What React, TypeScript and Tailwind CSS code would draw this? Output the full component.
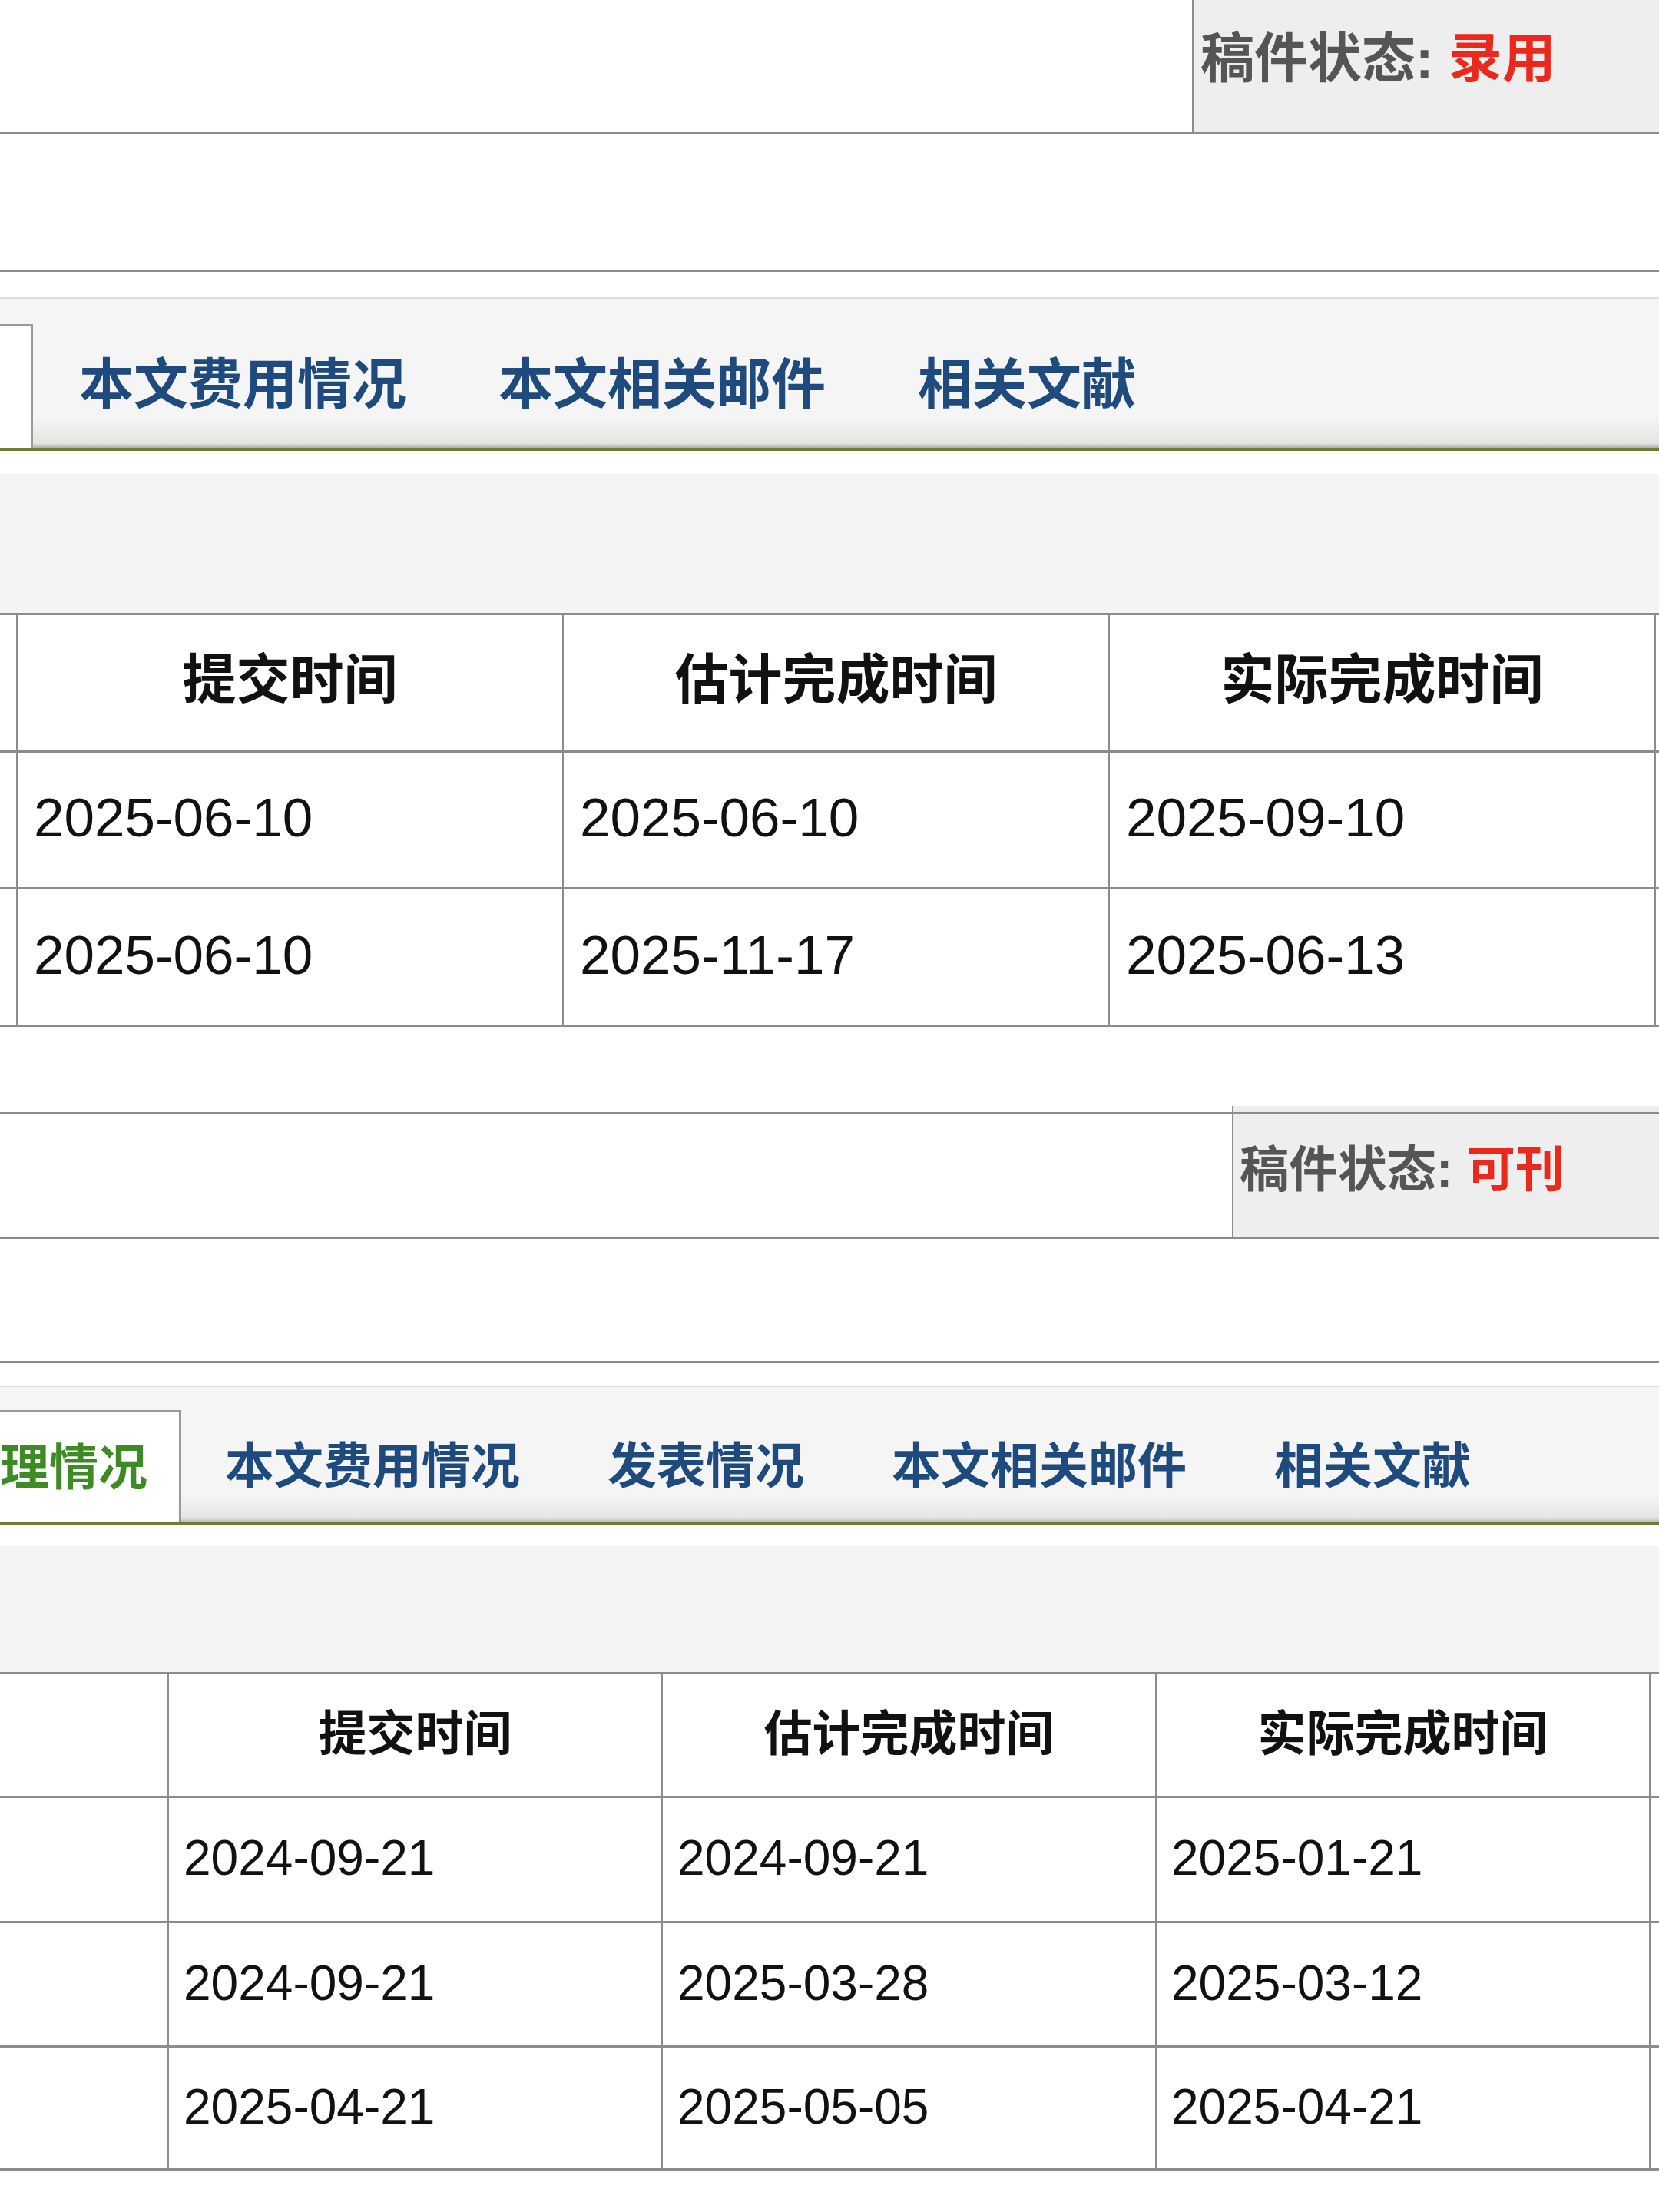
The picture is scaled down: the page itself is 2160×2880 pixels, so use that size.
const font = { fontFamily: '"Liberation Sans", "Noto Sans CJK SC", sans-serif' };

function StatusRowOne() {
  return (
    <>
      <div className="flex h-[175px] border-b-[3px] border-[#8c8c8c]">
        <div className="flex-1" />
        <div className="flex w-[608px] items-center border-l-[3px] border-[#8c8c8c] bg-[#eeeeee] pb-[18px] pl-[8px] text-[70px] font-bold leading-none">
          <span className="text-[#555555]">稿件状态:&nbsp;</span>
          <span className="text-[#e8291c]">录用</span>
        </div>
      </div>
      <div className="h-[179px] border-b-[3px] border-[#8c8c8c]" />
      <div className="h-[33px]" />
    </>
  );
}

function TabsOne() {
  const tabs = ['本文费用情况', '本文相关邮件', '相关文献'];
  return (
    <>
      <div className="h-[2px] bg-[#dddddd]" />
      <div className="flex h-[198px] items-end border-b-4 border-[#6e7d32] bg-[linear-gradient(to_bottom,#f5f5f5_0%,#f5f5f5_80%,#e4e4e2_97%,#b0b0b0_100%)]">
        {/* active tab, its label lies off the left edge */}
        <div className="h-[161px] w-[43px] shrink-0 border-r-[3px] border-t-[3px] border-[#999999] bg-white" />
        {tabs.map((t) => (
          <div key={t} className="flex h-[161px] shrink-0 items-center px-[60px] pb-[4px] text-[71px] font-bold leading-none text-[#1e4a7d]">
            {t}
          </div>
        ))}
      </div>
      <div className="h-[30px]" />
      <div className="h-[181px] bg-[#f4f4f4]" />
    </>
  );
}

function TableOne() {
  const rows = [
    ['2025-06-10', '2025-06-10', '2025-09-10'],
    ['2025-06-10', '2025-11-17', '2025-06-13'],
  ];
  const heights = ['h-[178px]', 'h-[179px]'];
  return (
    <div className="border-t-[3px] border-[#8c8c8c]">
      <div className="flex h-[179px] border-b-[3px] border-[#8c8c8c]">
        <div className="w-[21px] shrink-0" />
        {['提交时间', '估计完成时间', '实际完成时间'].map((h) => (
          <div key={h} className="flex w-[711px] shrink-0 items-center justify-center border-l-2 border-[#8c8c8c] pb-[6px] text-[70px] font-bold leading-none text-[#111111]">
            {h}
          </div>
        ))}
        <div className="flex-1 border-l-2 border-[#8c8c8c]" />
      </div>
      {rows.map((r, i) => (
        <div key={i} className={`flex ${heights[i]} border-b-[3px] border-[#8c8c8c]`}>
          <div className="w-[21px] shrink-0" />
          {r.map((d, j) => (
            <div key={j} className="flex w-[711px] shrink-0 items-center border-l-2 border-[#8c8c8c] pb-[6px] pl-[21px] text-[71px] leading-none text-[#111111]">
              {d}
            </div>
          ))}
          <div className="flex-1 border-l-2 border-[#8c8c8c]" />
        </div>
      ))}
    </div>
  );
}

function StatusRowTwo() {
  return (
    <>
      <div className="flex h-[8px]">
        <div className="flex-1" />
        <div className="w-[556px] border-l-2 border-[#8c8c8c] bg-[#eeeeee]" />
      </div>
      <div className="flex h-[165px] border-y-[3px] border-[#8c8c8c]">
        <div className="flex-1" />
        <div className="flex w-[556px] items-center border-l-2 border-[#8c8c8c] bg-[#eeeeee] pb-[16px] pl-[8px] text-[64px] font-bold leading-none">
          <span className="text-[#555555]">稿件状态:&nbsp;</span>
          <span className="text-[#e8291c]">可刊</span>
        </div>
      </div>
      <div className="h-[162px] border-b-[3px] border-[#8c8c8c]" />
      <div className="h-[29px]" />
    </>
  );
}

function TabsTwo() {
  const tabs = ['本文费用情况', '发表情况', '本文相关邮件', '相关文献'];
  return (
    <>
      <div className="h-[2px] bg-[#dddddd]" />
      <div className="flex h-[180px] items-end border-b-4 border-[#6e7d32] bg-[linear-gradient(to_bottom,#f5f5f5_0%,#f5f5f5_80%,#e4e4e2_97%,#b0b0b0_100%)]">
        <div className="flex h-[146px] shrink-0 items-center border-r-[3px] border-t-[3px] border-[#999999] bg-white pr-[41px] text-[64px] font-bold leading-none text-[#3e8b25]">
          理情况
        </div>
        {tabs.map((t) => (
          <div key={t} className="flex h-[146px] shrink-0 items-center px-[57px] text-[64px] font-bold leading-none text-[#1e4a7d]">
            {t}
          </div>
        ))}
      </div>
      <div className="h-[27px]" />
      <div className="h-[164px] bg-[#f4f4f4]" />
    </>
  );
}

function TableTwo() {
  const rows = [
    ['2024-09-21', '2024-09-21', '2025-01-21'],
    ['2024-09-21', '2025-03-28', '2025-03-12'],
    ['2025-04-21', '2025-05-05', '2025-04-21'],
  ];
  const heights = ['h-[163px]', 'h-[162px]', 'h-[160px]'];
  return (
    <div className="border-t-[3px] border-[#8c8c8c]">
      <div className="flex h-[161px] border-b-[3px] border-[#8c8c8c]">
        <div className="w-[218px] shrink-0" />
        {['提交时间', '估计完成时间', '实际完成时间'].map((h) => (
          <div key={h} className="flex w-[643px] shrink-0 items-center justify-center border-l-2 border-[#8c8c8c] pb-[4px] text-[63px] font-bold leading-none text-[#111111]">
            {h}
          </div>
        ))}
        <div className="flex-1 border-l-2 border-[#8c8c8c]" />
      </div>
      {rows.map((r, i) => (
        <div key={i} className={`flex ${heights[i]} border-b-[3px] border-[#8c8c8c]`}>
          <div className="w-[218px] shrink-0" />
          {r.map((d, j) => (
            <div key={j} className="flex w-[643px] shrink-0 items-center border-l-2 border-[#8c8c8c] pb-[4px] pl-[19px] text-[64px] leading-none text-[#111111]">
              {d}
            </div>
          ))}
          <div className="flex-1 border-l-2 border-[#8c8c8c]" />
        </div>
      ))}
    </div>
  );
}

export default function App() {
  return (
    <div className="h-[2880px] w-[2160px] overflow-hidden bg-white" style={font}>
      <StatusRowOne />
      <TabsOne />
      <TableOne />
      <div className="h-[103px]" />
      <StatusRowTwo />
      <TabsTwo />
      <TableTwo />
    </div>
  );
}
